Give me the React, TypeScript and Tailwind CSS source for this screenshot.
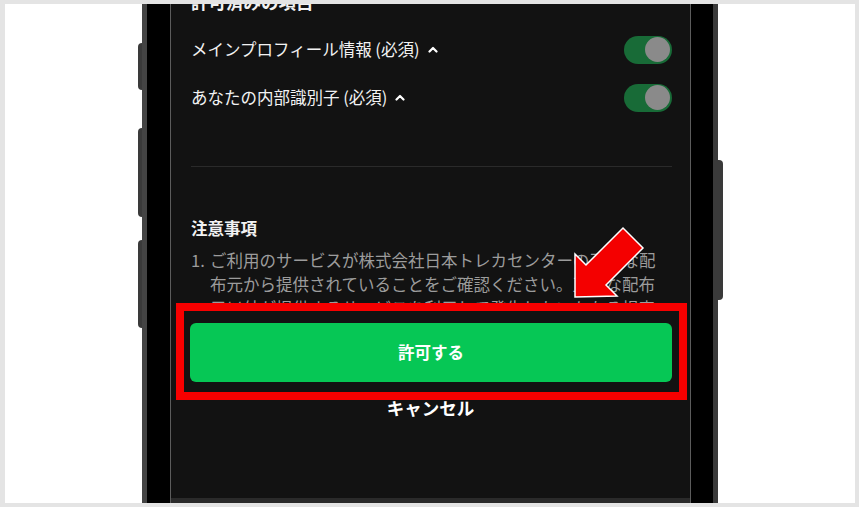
import React from 'react';

const jp = { fontFamily: '"Noto Sans CJK JP", "Noto Sans", sans-serif' };

const Toggle = () => (
  <div className="flex h-[28px] w-[48px] items-center justify-end rounded-full bg-[#186b37] pr-[2px]">
    <div className="h-[25px] w-[25px] rounded-full bg-[#8a8a8a]" />
  </div>
);

const Caret = () => (
  <svg width="10" height="7" viewBox="0 0 10 7" className="ml-[8px]">
    <polyline points="1.5,5.5 5,2 8.5,5.5" fill="none" stroke="#fff" strokeWidth="2.2" strokeLinecap="round" strokeLinejoin="round" />
  </svg>
);

const ScopeRow = ({ label }: { label: string }) => (
  <div className="flex h-[48px] items-center justify-between">
    <div className="flex items-center text-[16.5px] text-[#f2f2f2]">
      <span>{label}</span>
      <Caret />
    </div>
    <Toggle />
  </div>
);

export default function App() {
  return (
    <div className="relative h-[507px] w-[859px] overflow-hidden border-[4px] border-l-[5px] border-[#e4e4e4] bg-white" style={jp}>
      <div className="flex h-[499px] pl-[133px]">
        {/* side buttons left */}
        <div className="flex w-[4px] flex-col">
          <div className="mt-[39px] h-[47px] rounded-l-sm bg-[#3a3a3a]" />
          <div className="mt-[38px] h-[89px] rounded-l-sm bg-[#3a3a3a]" />
          <div className="mt-[23px] h-[88px] rounded-l-sm bg-[#3a3a3a]" />
        </div>

        {/* phone frame */}
        <div className="flex h-full border-x-[5px] border-l-[#444] border-r-[#3a3a3a] bg-black pl-[23px] pr-[22px]">
          <div className="flex h-full w-[521px] flex-col border-x border-[#5c5c5c] bg-[#121212]">
            {/* scrolling content */}
            <div className="h-[299px] overflow-hidden pl-[20px] pr-[18px]">
              <div className="mt-[-14px] text-[17.5px] font-bold leading-[24px] text-[#f2f2f2]">許可済みの項目</div>
              <div className="mt-[11.5px]">
                <ScopeRow label="メインプロフィール情報 (必須)" />
                <ScopeRow label="あなたの内部識別子 (必須)" />
              </div>
              <div className="mt-[44.5px] h-px bg-[#2a2a2a]" />
              <div className="mt-[49px] text-[16.5px] font-bold leading-[24px] text-[#f2f2f2]">注意事項</div>
              <div className="mt-[8px] flex text-[16.5px] leading-[24px] text-[#9c9c9c]">
                <span className="w-[19px] shrink-0">1.</span>
                <p className="w-[450px]">
                  ご利用のサービスが株式会社日本トレカセンターの正規な配布元から提供されていることをご確認ください。正規な配布元以外が提供するサービスを利用して発生したいかなる損害
                </p>
              </div>
            </div>

            {/* footer */}
            <div className="relative flex flex-1 flex-col bg-[#121212]">
              <div className="pl-[19px] pr-[18px] pt-[20px]">
                <button className="flex h-[59px] w-full items-center justify-center rounded-[6px] bg-[#06c755] text-[16.5px] font-bold text-white">
                  許可する
                </button>
              </div>
              <div className="mt-[14px] text-center text-[17.5px] font-bold leading-[24px] text-white">キャンセル</div>
              <div className="mt-auto h-[5px] bg-[#2a2a2a]" />
              {/* highlight box */}
              <div className="absolute left-[5px] top-0 h-[97px] w-[511px] border-[8px] border-[#f70000]" />
            </div>
          </div>
        </div>

        {/* side button right */}
        <div className="flex w-[5px] flex-col">
          <div className="mt-[156px] h-[140px] rounded-r-sm bg-[#3a3a3a]" />
        </div>
      </div>

      {/* pointer arrow */}
      <svg className="absolute left-[-5px] top-[-4px]" width="859" height="507" viewBox="0 0 859 507">
        <polygon
          points="575,297 575,254 586,265 623,228 643,248 606,285 617,296"
          fill="#f40000"
          stroke="#fff"
          strokeWidth="1.5"
          strokeLinejoin="miter"
        />
      </svg>
    </div>
  );
}
